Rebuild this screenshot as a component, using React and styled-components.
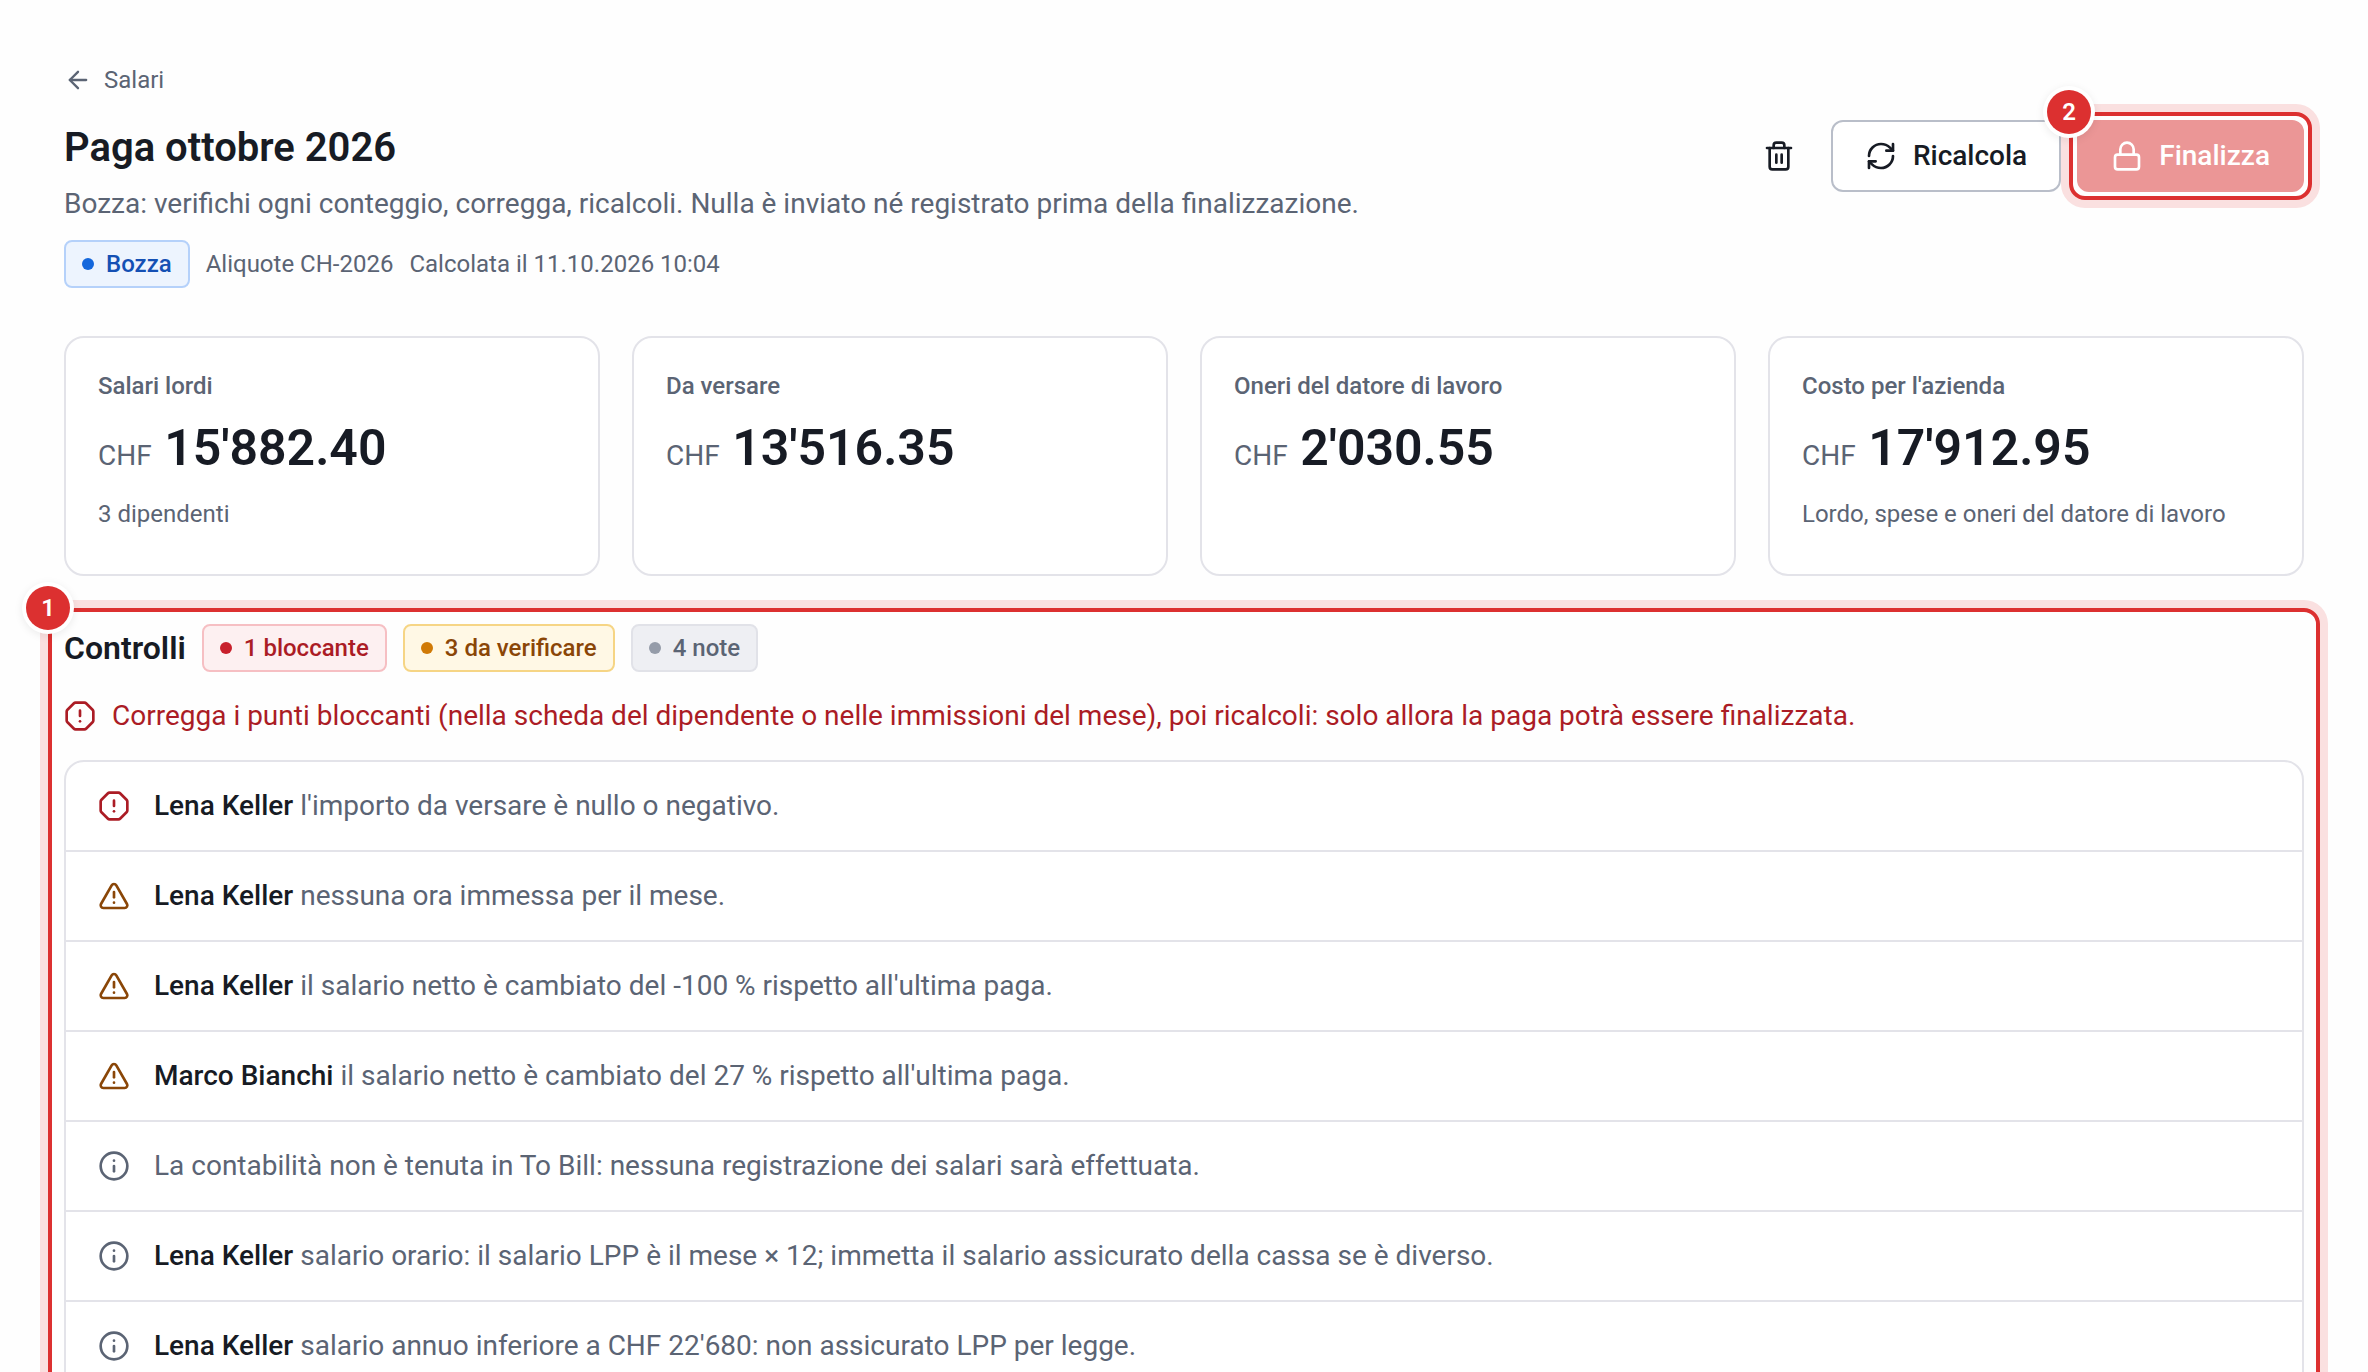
import React from "react";
import styled, { createGlobalStyle } from "styled-components";
import {
  ArrowLeft,
  Info,
  Lock,
  OctagonAlert,
  RefreshCw,
  Trash2,
  TriangleAlert,
} from "lucide-react";

const totals = [
  { label: "Salari lordi", amount: "15'882.40", note: "3 dipendenti" },
  { label: "Da versare", amount: "13'516.35" },
  { label: "Oneri del datore di lavoro", amount: "2'030.55" },
  {
    label: "Costo per l'azienda",
    amount: "17'912.95",
    note: "Lordo, spese e oneri del datore di lavoro",
  },
];

const checks = [
  { level: "block", name: "Lena Keller", text: "l'importo da versare è nullo o negativo." },
  { level: "warn", name: "Lena Keller", text: "nessuna ora immessa per il mese." },
  {
    level: "warn",
    name: "Lena Keller",
    text: "il salario netto è cambiato del -100 % rispetto all'ultima paga.",
  },
  {
    level: "warn",
    name: "Marco Bianchi",
    text: "il salario netto è cambiato del 27 % rispetto all'ultima paga.",
  },
  {
    level: "note",
    text: "La contabilità non è tenuta in To Bill: nessuna registrazione dei salari sarà effettuata.",
  },
  {
    level: "note",
    name: "Lena Keller",
    text: "salario orario: il salario LPP è il mese × 12; immetta il salario assicurato della cassa se è diverso.",
  },
  {
    level: "note",
    name: "Lena Keller",
    text: "salario annuo inferiore a CHF 22'680: non assicurato LPP per legge.",
  },
];

const levelIcons = {
  block: { icon: OctagonAlert, color: "#ab1c25" },
  warn: { icon: TriangleAlert, color: "#8a4607" },
  note: { icon: Info, color: "#5b6474" },
};

const tones = {
  blue: { text: "#1450b4", dot: "#1467dc", back: "#edf4fe", line: "#b5d1fa" },
  red: { text: "#ab1c25", dot: "#c8202c", back: "#fdf0f1", line: "#f6bfc3" },
  amber: { text: "#8a4607", dot: "#d07a06", back: "#fff8e5", line: "#f6d585" },
  grey: { text: "#5b6474", dot: "#959ca9", back: "#eeeff3", line: "#e1e2e8" },
};

const App = () => {
  return (
    <>
      <GlobalStyle />
      <Page>
        <BackLink href="#salari">
          <ArrowLeft size={28} strokeWidth={2} />
          Salari
        </BackLink>
        <Header>
          <HeaderText>
            <Title>Paga ottobre 2026</Title>
            <Subtitle>
              Bozza: verifichi ogni conteggio, corregga, ricalcoli. Nulla è inviato né registrato
              prima della finalizzazione.
            </Subtitle>
            <MetaRow>
              <Badge $tone="blue">Bozza</Badge>
              <Meta>Aliquote CH-2026</Meta>
              <Meta>Calcolata il 11.10.2026 10:04</Meta>
            </MetaRow>
          </HeaderText>
          <Actions>
            <IconButton type="button" aria-label="Elimina">
              <Trash2 size={32} strokeWidth={2} />
            </IconButton>
            <OutlineButton type="button">
              <RefreshCw size={32} strokeWidth={2} />
              Ricalcola
            </OutlineButton>
            <Marked>
              <PrimaryButton type="button" disabled>
                <Lock size={32} strokeWidth={2} />
                Finalizza
              </PrimaryButton>
              <Frame $gap={4}>
                <Step>2</Step>
              </Frame>
            </Marked>
          </Actions>
        </Header>
        <Cards>
          {totals.map((item) => (
            <Card key={item.label}>
              <CardLabel>{item.label}</CardLabel>
              <CardAmount>
                <Currency>CHF</Currency> {item.amount}
              </CardAmount>
              {item.note && <CardNote>{item.note}</CardNote>}
            </Card>
          ))}
        </Cards>
        <Section>
          <SectionHead>
            <SectionTitle>Controlli</SectionTitle>
            <Badge $tone="red">1 bloccante</Badge>
            <Badge $tone="amber">3 da verificare</Badge>
            <Badge $tone="grey">4 note</Badge>
          </SectionHead>
          <Alert>
            <OctagonAlert size={32} strokeWidth={2} />
            Corregga i punti bloccanti (nella scheda del dipendente o nelle immissioni del mese),
            poi ricalcoli: solo allora la paga potrà essere finalizzata.
          </Alert>
          <CheckList>
            {checks.map((check) => {
              const { icon: Icon, color } = levelIcons[check.level];
              return (
                <Check key={check.text}>
                  <Icon size={32} strokeWidth={2} color={color} />
                  <span>
                    {check.name && <Name>{check.name}</Name>} {check.text}
                  </span>
                </Check>
              );
            })}
          </CheckList>
          <Frame $gap={12}>
            <Step>1</Step>
          </Frame>
        </Section>
      </Page>
    </>
  );
};

export default App;

const GlobalStyle = createGlobalStyle`
  * {
    box-sizing: border-box;
  }
  body {
    margin: 0;
    background: #fefefe;
    color: #171b24;
    font-family: Roboto, "Liberation Sans", sans-serif;
    font-size: 28px;
    line-height: 40px;
  }
  button {
    font: inherit;
  }
  svg {
    flex: none;
  }
`;

const Page = styled.main`
  height: 100vh;
  padding: 64px;
  overflow: hidden;
`;
const BackLink = styled.a`
  display: flex;
  align-items: center;
  gap: 12px;
  width: fit-content;
  color: #5b6474;
  font-size: 24px;
  line-height: 32px;
  text-decoration: none;
`;
const Header = styled.header`
  display: flex;
  justify-content: space-between;
  align-items: flex-start;
  margin-top: 24px;
`;
const HeaderText = styled.div`
  min-width: 0;
`;
const Title = styled.h1`
  margin: 4px 0 12px;
  font-size: 40px;
  line-height: 48px;
  font-weight: 600;
`;
const Subtitle = styled.p`
  margin: 0;
  color: #5b6474;
`;
const MetaRow = styled.div`
  display: flex;
  align-items: center;
  gap: 16px;
  margin-top: 16px;
`;
const Meta = styled.span`
  color: #5b6474;
  font-size: 24px;
`;
const Badge = styled.span`
  display: inline-flex;
  align-items: center;
  gap: 12px;
  height: 48px;
  padding: 0 16px;
  border: 2px solid ${({ $tone }) => tones[$tone].line};
  border-radius: 8px;
  background: ${({ $tone }) => tones[$tone].back};
  color: ${({ $tone }) => tones[$tone].text};
  font-size: 24px;
  font-weight: 500;
  &::before {
    content: "";
    width: 12px;
    height: 12px;
    border-radius: 50%;
    background: ${({ $tone }) => tones[$tone].dot};
  }
`;
const Actions = styled.div`
  display: flex;
  gap: 16px;
`;
const IconButton = styled.button`
  display: flex;
  align-items: center;
  justify-content: center;
  width: 72px;
  height: 72px;
  border: 0;
  background: none;
  color: #171b24;
`;
const OutlineButton = styled.button`
  display: flex;
  align-items: center;
  gap: 16px;
  height: 72px;
  padding: 0 32px;
  border: 2px solid #b9bec9;
  border-radius: 12px;
  background: #fff;
  color: #171b24;
  font-weight: 500;
`;
const PrimaryButton = styled(OutlineButton)`
  border-color: #eb9696;
  background: #eb9696;
  color: #fff;
`;
const Marked = styled.div`
  position: relative;
`;
const Frame = styled.div`
  position: absolute;
  inset: ${({ $gap }) => -($gap + 4)}px;
  border: 4px solid #dc3030;
  border-radius: 16px;
  box-shadow: 0 0 0 8px #fae0e0;
  pointer-events: none;
`;
const Step = styled.span`
  position: absolute;
  top: -26px;
  left: -26px;
  width: 44px;
  height: 44px;
  border-radius: 50%;
  background: #dc3030;
  box-shadow: 0 0 0 4px #fff, 0 2px 8px 4px rgba(0, 0, 0, 0.08);
  color: #fff;
  font-size: 24px;
  line-height: 44px;
  font-weight: 600;
  text-align: center;
`;
const Cards = styled.div`
  display: grid;
  grid-template-columns: repeat(4, 1fr);
  gap: 32px;
  margin-top: 48px;
`;
const Card = styled.div`
  min-height: 240px;
  padding: 32px;
  border: 2px solid #e3e3e9;
  border-radius: 20px;
  background: #fff;
`;
const CardLabel = styled.div`
  color: #5b6474;
  font-size: 24px;
  line-height: 32px;
  font-weight: 500;
`;
const CardAmount = styled.div`
  margin: 16px 0 8px;
  font-size: 50px;
  line-height: 60px;
  font-weight: 600;
`;
const Currency = styled.span`
  color: #5b6474;
  font-size: 28px;
  font-weight: 400;
`;
const CardNote = styled.div`
  color: #5b6474;
  font-size: 24px;
  line-height: 40px;
`;
const Section = styled.section`
  position: relative;
  margin-top: 48px;
`;
const SectionHead = styled.div`
  display: flex;
  align-items: center;
  gap: 16px;
`;
const SectionTitle = styled.h2`
  margin: 0;
  font-size: 32px;
  font-weight: 600;
`;
const Alert = styled.p`
  display: flex;
  align-items: center;
  gap: 16px;
  margin: 24px 0;
  color: #ab1c25;
`;
const CheckList = styled.ul`
  margin: 0;
  padding: 0;
  border: 2px solid #e3e3e9;
  border-radius: 20px;
  background: #fff;
  list-style: none;
`;
const Check = styled.li`
  display: flex;
  align-items: center;
  gap: 24px;
  padding: 24px 32px;
  color: #5b6474;
  & + & {
    border-top: 2px solid #e3e3e9;
  }
`;
const Name = styled.strong`
  color: #171b24;
  font-weight: 500;
`;
